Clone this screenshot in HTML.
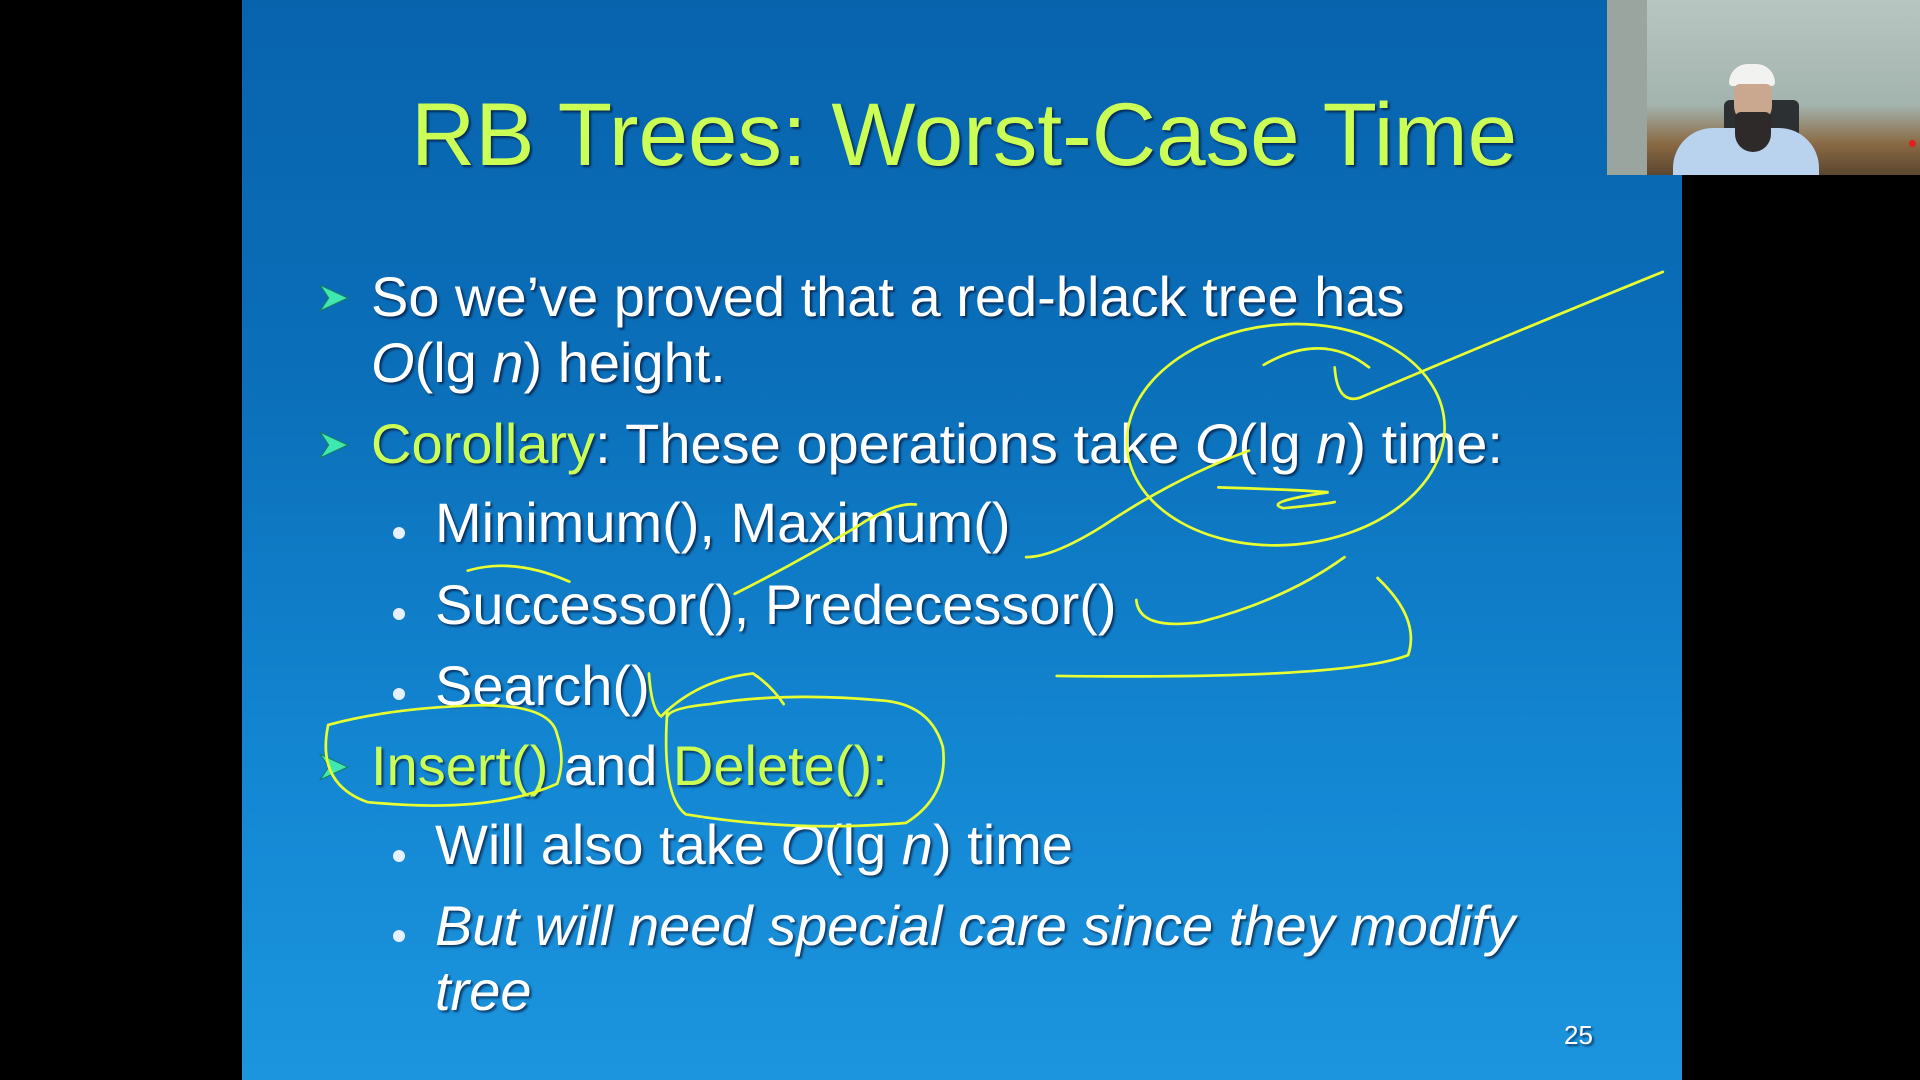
<!DOCTYPE html>
<html><head><meta charset="utf-8"><style>
body{margin:0;width:1920px;height:1080px;background:#000;overflow:hidden;position:relative;font-family:"Liberation Sans",Arial,sans-serif}
#slide{position:absolute;left:242px;top:0;width:1440px;height:1080px;background:linear-gradient(180deg,#0863ad 0%,#0b6fb9 35%,#1386d2 70%,#1c95de 100%)}
.t{position:absolute;line-height:1;white-space:nowrap;color:#fff;text-shadow:2px 2px 2px rgba(0,0,30,.6)}
.title{font-size:89px;color:#ccff55;left:411px;top:90px}
.l{font-size:56px}
.g{color:#ccff55}
.arr{position:absolute;width:32px;height:32px}
.dot{position:absolute;width:12px;height:12px;border-radius:50%;background:#e6f0ff}
#cam{position:absolute;left:1607px;top:0;width:313px;height:175px;background:linear-gradient(180deg,#b8c6c2,#a3b3ad 60%,#8a6a44 82%,#5b4630)}
</style></head><body>
<div id="slide"></div>
<div class="t title">RB Trees: Worst-Case Time</div>

<svg class="arr" style="left:318px;top:282px" viewBox="0 0 30 30"><path d="M2 3 L28 15 L2 27 L10 15Z" fill="#3ee8b0" stroke="#1a7a60" stroke-width="1"/></svg>
<div class="t l" style="left:371px;top:269px">So we’ve proved that a red-black tree has</div>
<div class="t l" style="left:371px;top:335px"><i>O</i>(lg <i>n</i>) height.</div>

<svg class="arr" style="left:318px;top:429px" viewBox="0 0 30 30"><path d="M2 3 L28 15 L2 27 L10 15Z" fill="#3ee8b0" stroke="#1a7a60" stroke-width="1"/></svg>
<div class="t l" style="left:371px;top:416px"><span class="g">Corollary</span>: These operations take <i>O</i>(lg <i>n</i>) time:</div>

<div class="dot" style="left:393px;top:527px"></div>
<div class="t l" style="left:435px;top:495px">Minimum(), Maximum()</div>
<div class="dot" style="left:393px;top:608px"></div>
<div class="t l" style="left:435px;top:577px">Successor(), Predecessor()</div>
<div class="dot" style="left:393px;top:688px"></div>
<div class="t l" style="left:435px;top:658px">Search()</div>

<svg class="arr" style="left:318px;top:751px" viewBox="0 0 30 30"><path d="M2 3 L28 15 L2 27 L10 15Z" fill="#3ee8b0" stroke="#1a7a60" stroke-width="1"/></svg>
<div class="t l" style="left:371px;top:738px"><span class="g">Insert()</span> and <span class="g">Delete():</span></div>

<div class="dot" style="left:393px;top:850px"></div>
<div class="t l" style="left:435px;top:817px">Will also take <i>O</i>(lg <i>n</i>) time</div>
<div class="dot" style="left:393px;top:930px"></div>
<div class="t l" style="left:435px;top:898px"><i>But will need special care since they modify</i></div>
<div class="t l" style="left:435px;top:963px"><i>tree</i></div>

<div class="t" style="font-size:26px;left:1564px;top:1022px">25</div>

<svg style="position:absolute;left:0;top:0" width="1920" height="1080" viewBox="0 0 1568 882" preserveAspectRatio="none" fill="none" stroke="#e8ff30" stroke-width="2.2" stroke-linecap="round">
<ellipse cx="1050" cy="355" rx="130" ry="90" transform="rotate(-5 1050 355)"/>
<path d="M1090 300 Q1092 330 1110 325 Q1240 270 1358 222"/>
<path d="M1032 298 Q1080 270 1118 300"/>
<path d="M995 398 Q1060 400 1085 402 Q1030 410 1048 415 Q1080 412 1090 410"/>
<path d="M838 455 Q860 455 900 430 Q960 390 1020 368"/>
<path d="M382 466 Q420 455 465 475"/>
<path d="M600 485 Q650 460 700 430 Q730 410 748 412"/>
<path d="M928 490 Q930 515 980 508 Q1050 490 1098 455"/>
<path d="M1125 472 Q1160 505 1150 535 Q1100 555 863 552"/>
<path d="M530 550 Q532 580 540 585 Q570 555 615 550 Q630 560 640 575"/>
<path d="M455 600 Q450 575 390 576 Q320 578 268 592 Q258 640 300 655 Q400 665 455 640 Q462 620 455 600"/>
<path d="M545 580 Q540 650 560 665 Q650 680 740 672 Q775 650 770 610 Q760 575 720 572 Q640 565 580 575 Q548 578 545 585"/>
</svg>
<div id="cam">
<div style="position:absolute;left:0;top:0;width:40px;height:175px;background:#9aa59f"></div>
<div style="position:absolute;left:117px;top:100px;width:75px;height:75px;background:#2d3033;border-radius:6px"></div>
<div style="position:absolute;left:66px;top:128px;width:146px;height:47px;background:#b9d3ef;border-radius:40px 40px 0 0"></div>
<div style="position:absolute;left:122px;top:64px;width:46px;height:22px;background:#f2f2f0;border-radius:23px 23px 4px 4px"></div>
<div style="position:absolute;left:127px;top:84px;width:38px;height:40px;background:#c9a88f;border-radius:6px 6px 18px 18px"></div>
<div style="position:absolute;left:128px;top:112px;width:36px;height:40px;background:#2e2a2a;border-radius:6px 6px 18px 18px"></div>
<div style="position:absolute;left:302px;top:140px;width:7px;height:7px;border-radius:50%;background:#e02020"></div>
</div>
</body></html>
